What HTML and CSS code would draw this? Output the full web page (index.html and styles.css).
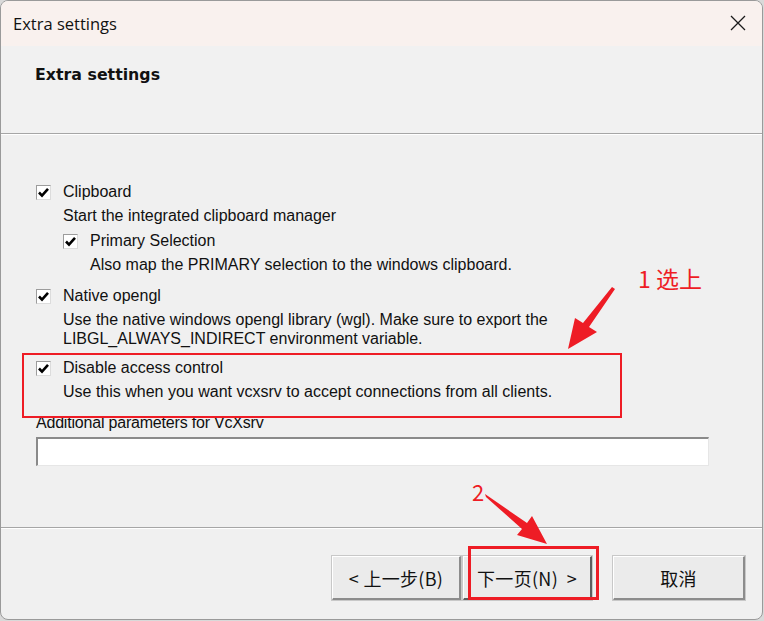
FILE: index.html
```html
<!DOCTYPE html>
<html>
<head>
<meta charset="utf-8">
<link rel="stylesheet" href="styles.css">
</head>
<body>
<div class="window">
  <div class="titlebar">
    <span class="title">Extra settings</span>
    <svg class="close" width="16" height="16" viewBox="0 0 16 16"><path d="M1 1L15 15M15 1L1 15" stroke="#1a1a1a" stroke-width="1.3" fill="none"/></svg>
  </div>
  <div class="header">
    <div class="header-title">Extra settings</div>
  </div>
  <div class="sep"></div>
  <div class="content">
    <div class="row"><span class="cb"><svg width="13" height="13" viewBox="0 0 13 13"><path d="M2 6.5L5 9.6L11 2.8" stroke="#000" stroke-width="2.6" fill="none"/></svg></span><span>Clipboard</span></div>
    <div class="desc">Start the integrated clipboard manager</div>
    <div class="row nested r-primary"><span class="cb"><svg width="13" height="13" viewBox="0 0 13 13"><path d="M2 6.5L5 9.6L11 2.8" stroke="#000" stroke-width="2.6" fill="none"/></svg></span><span>Primary Selection</span></div>
    <div class="desc nested-desc">Also map the PRIMARY selection to the windows clipboard.</div>
    <div class="row r-native"><span class="cb"><svg width="13" height="13" viewBox="0 0 13 13"><path d="M2 6.5L5 9.6L11 2.8" stroke="#000" stroke-width="2.6" fill="none"/></svg></span><span>Native opengl</span></div>
    <div class="desc multi">Use the native windows opengl library (wgl). Make sure to export the<br>LIBGL_ALWAYS_INDIRECT environment variable.</div>
    <div class="row r-disable"><span class="cb"><svg width="13" height="13" viewBox="0 0 13 13"><path d="M2 6.5L5 9.6L11 2.8" stroke="#000" stroke-width="2.6" fill="none"/></svg></span><span>Disable access control</span></div>
    <div class="desc">Use this when you want vcxsrv to accept connections from all clients.</div>
    <div class="param-label">Additional parameters for VcXsrv</div>
    <div class="input"></div>
  </div>
  <div class="sep"></div>
  <div class="footer">
    <div class="btn btn-back">&lt; 上一步(B)</div>
    <div class="btn btn-next">下一页(N) &nbsp;&gt;</div>
    <div class="btn btn-cancel">取消</div>
  </div>

  <div class="mark mark1"></div>
  <div class="mark mark2"></div>
  <div class="note note1">1 选上</div>
  <div class="note note2">2</div>
  <svg class="arrows" width="764" height="621" viewBox="0 0 764 621">
    <polygon points="612,287 583,323 575,318 568,349 597,332 589,327 615,289" fill="#ee1c25"/>
    <polygon points="485,494 527,523 532,516 547,544 517,535 522,529 486,497" fill="#ee1c25"/>
  </svg>
</div>
</body>
</html>
```
FILE: styles.css
```css
html, body {
  margin: 0;
  padding: 0;
  background: #d9d9d9;
}
.window {
  position: relative;
  width: 763px;
  height: 620px;
  box-sizing: border-box;
  border: 1px solid #9a9a9a;
  border-radius: 8px;
  background: #f0f0f0;
  overflow: hidden;
  display: flex;
  flex-direction: column;
  font-family: "Liberation Sans", Arial, sans-serif;
  font-size: 16px;
  color: #111;
}
.titlebar {
  height: 45px;
  background: #f9f1ee;
  display: flex;
  align-items: center;
  justify-content: space-between;
  padding: 0 16px 0 12px;
  flex: none;
}
.title {
  font-family: "Open Sans", "Noto Sans", sans-serif;
  font-size: 16.5px;
  color: #111;
  margin-top: -1px;
}
.close {
  margin-top: -2px;
}
.header {
  height: 87px;
  background: #f1f1f1;
  flex: none;
  padding: 0 0 0 34px;
  box-sizing: border-box;
}
.header-title {
  font-family: "DejaVu Sans", Verdana, sans-serif;
  font-weight: bold;
  font-size: 15.8px;
  margin-top: 18px;
  line-height: 22px;
  color: #111;
}
.sep {
  height: 1px;
  background: #a6a6a6;
  border-bottom: 1px solid #ffffff;
  flex: none;
}
.content {
  height: 392px;
  box-sizing: border-box;
  padding: 45px 0 0 35px;
  flex: none;
}
.row {
  display: flex;
  align-items: center;
  height: 24px;
}
.cb {
  width: 15px;
  height: 15px;
  box-sizing: border-box;
  background: #fff;
  border-top: 1px solid #9c9c9c;
  border-left: 1px solid #9c9c9c;
  border-right: 1px solid #dcdcdc;
  border-bottom: 1px solid #dcdcdc;
  display: flex;
  align-items: center;
  justify-content: center;
  margin-right: 12px;
  flex: none;
}
.cb svg {
  display: block;
  flex: none;
}
.desc {
  height: 24px;
  line-height: 24px;
  padding-left: 27px;
  white-space: nowrap;
}
.nested {
  padding-left: 27px;
}
.r-primary {
  margin-top: 1px;
}
.nested-desc {
  padding-left: 54px;
}
.r-native {
  margin-top: 7px;
}
.multi {
  height: auto;
  line-height: 19px;
  margin-top: 2px;
}
.r-disable {
  margin-top: 8px;
}
.param-label {
  margin-top: 10px;
  line-height: 18px;
  letter-spacing: -0.2px;
}
.input {
  margin-top: 5px;
  width: 673px;
  height: 29px;
  box-sizing: border-box;
  background: #fff;
  border-top: 2px solid #8a8a8a;
  border-left: 2px solid #8a8a8a;
  border-right: 1px solid #e6e6e6;
  border-bottom: 1px solid #e6e6e6;
}
.footer {
  flex: 1;
  display: flex;
  align-items: flex-start;
  padding: 27px 0 0 331px;
  font-family: "Noto Sans CJK SC", "Noto Sans", sans-serif;
  font-size: 18px;
  letter-spacing: 0.3px;
}
.btn {
  height: 44px;
  box-sizing: border-box;
  background: #ebebeb;
  border-top: 1px solid #ffffff;
  border-left: 1px solid #ffffff;
  border-right: 2px solid #8c8c8c;
  border-bottom: 2px solid #8c8c8c;
  outline: 1px solid #c8c8c8;
  display: flex;
  align-items: center;
  justify-content: center;
  color: #111;
}
.btn-back {
  width: 129px;
}
.btn-next {
  width: 129px;
  margin-left: 2px;
  border-right: 2px solid #5e5e5e;
  border-bottom: 2px solid #5e5e5e;
}
.btn-cancel {
  width: 132px;
  margin-left: 21px;
}
.mark {
  position: absolute;
  box-sizing: border-box;
  border: 2px solid #ee1c25;
}
.mark1 {
  left: 21px;
  top: 352px;
  width: 600px;
  height: 65px;
}
.mark2 {
  left: 467px;
  top: 545px;
  width: 131px;
  height: 54px;
  border-width: 3px;
}
.note {
  position: absolute;
  color: #ee1c25;
  font-family: "Noto Sans CJK SC", "Noto Sans", sans-serif;
  line-height: 1;
}
.note1 {
  left: 637px;
  top: 266px;
  font-size: 23px;
}
.note2 {
  left: 471px;
  top: 479px;
  font-size: 22px;
}
.arrows {
  position: absolute;
  left: -1px;
  top: -1px;
  pointer-events: none;
}
```
